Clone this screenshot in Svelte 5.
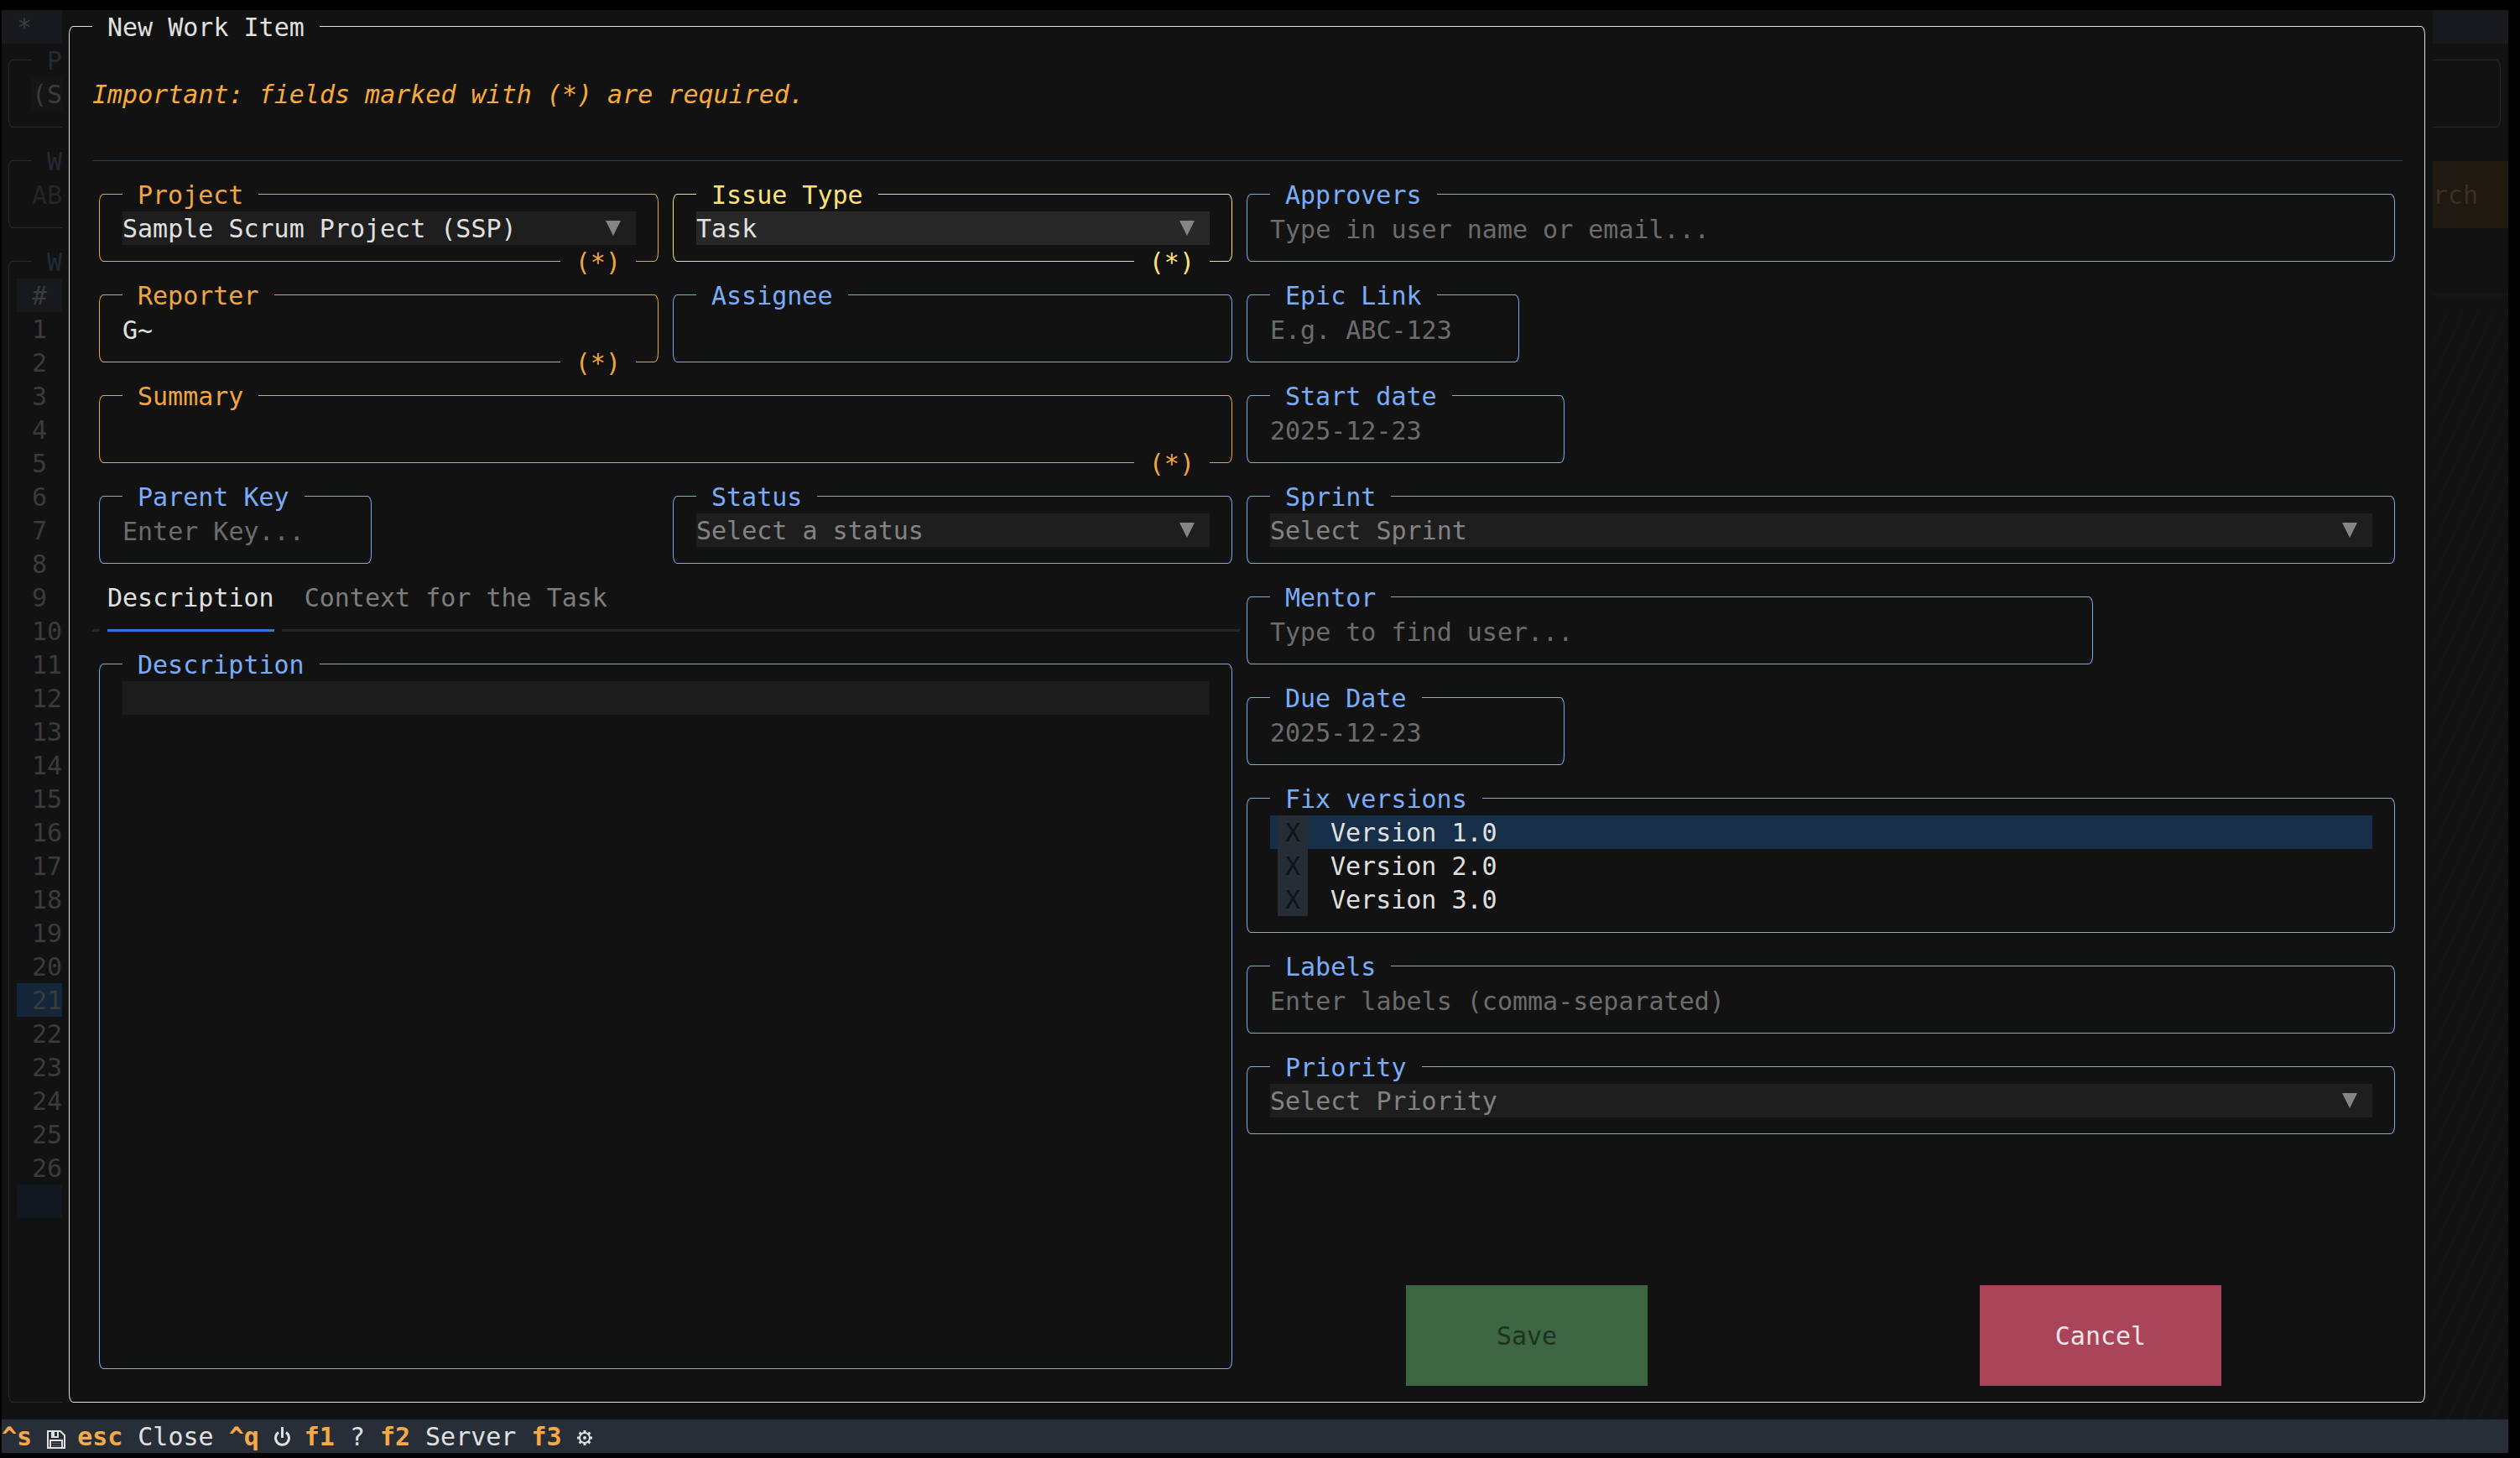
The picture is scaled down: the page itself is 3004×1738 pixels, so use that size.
<script lang="ts">
  interface Field {
    id: string;
    label: string;
    kind: 'text' | 'select';
    value?: string;
    placeholder?: string;
    required?: boolean;
    focused?: boolean;
    size?: 'short' | 'date' | 'user' | 'wide';
  }

  const leftFields: Field[] = [
    { id: 'project', label: 'Project', kind: 'select', value: 'Sample Scrum Project (SSP)', required: true },
    { id: 'issue-type', label: 'Issue Type', kind: 'select', value: 'Task', required: true, focused: true },
    { id: 'reporter', label: 'Reporter', kind: 'text', value: 'G~', required: true },
    { id: 'assignee', label: 'Assignee', kind: 'text' },
    { id: 'summary', label: 'Summary', kind: 'text', required: true, size: 'wide' },
    { id: 'parent-key', label: 'Parent Key', kind: 'text', placeholder: 'Enter Key...', size: 'short' },
    { id: 'status', label: 'Status', kind: 'select', placeholder: 'Select a status' },
  ];

  const rightFields: Field[] = [
    { id: 'approvers', label: 'Approvers', kind: 'text', placeholder: 'Type in user name or email...' },
    { id: 'epic-link', label: 'Epic Link', kind: 'text', placeholder: 'E.g. ABC-123', size: 'short' },
    { id: 'start-date', label: 'Start date', kind: 'text', placeholder: '2025-12-23', size: 'date' },
    { id: 'sprint', label: 'Sprint', kind: 'select', placeholder: 'Select Sprint' },
    { id: 'mentor', label: 'Mentor', kind: 'text', placeholder: 'Type to find user...', size: 'user' },
    { id: 'due-date', label: 'Due Date', kind: 'text', placeholder: '2025-12-23', size: 'date' },
  ];

  const extraFields: Field[] = [
    { id: 'labels', label: 'Labels', kind: 'text', placeholder: 'Enter labels (comma-separated)' },
    { id: 'priority', label: 'Priority', kind: 'select', placeholder: 'Select Priority' },
  ];

  const tabs = ['Description', 'Context for the Task'];
  const versions = ['Version 1.0', 'Version 2.0', 'Version 3.0'];
  const rowNumbers = Array.from({ length: 26 }, (_, i) => i + 1);
  const selectedRow = 21;

  let activeTab = $state('Description');
  let activeVersion = $state('Version 1.0');
  let picked = $state<string[]>([]);

  function toggleVersion(version: string) {
    activeVersion = version;
    picked = picked.includes(version) ? picked.filter((v) => v !== version) : [...picked, version];
  }
</script>

{#snippet field(f: Field)}
  <div
    class="box field {f.size ?? ''}"
    class:required={f.required}
    class:focused={f.focused}
  >
    <label class="box-title" for={f.id}>{f.label}</label>
    {#if f.kind === 'select'}
      <div class="select">
        <select id={f.id} class:empty={!f.value}>
          <option>{f.value ?? f.placeholder}</option>
        </select>
        <svg class="arrow" viewBox="0 0 18 18" aria-hidden="true"><path d="M0 0H18L9 18Z" /></svg>
      </div>
    {:else}
      <input id={f.id} type="text" value={f.value ?? ''} placeholder={f.placeholder} />
    {/if}
    <div class="box-foot">
      {#if f.required}<span class="box-subtitle">(*)</span>{/if}
    </div>
  </div>
{/snippet}

<div class="app">
  <div class="screen">
    <!-- Dimmed main screen -->
    <div class="backdrop" aria-hidden="true">
      <div class="topbar">*</div>
      <div class="box dim">
        <span class="box-title">P</span>
        <div class="dim-select">(S</div>
        <div class="box-foot"></div>
      </div>
      <div class="search-row">
        <div class="box dim grow">
          <span class="box-title">W</span>
          <div class="dim-input">AB</div>
          <div class="box-foot"></div>
        </div>
        <button class="search" type="button" tabindex="-1">rch</button>
      </div>
      <div class="results">
        <div class="box dim grow items">
          <span class="box-title">W</span>
          <table>
            <thead>
              <tr><th>#</th></tr>
            </thead>
            <tbody>
              {#each rowNumbers as n (n)}
                <tr class:selected={n === selectedRow}><td>{n}</td></tr>
              {/each}
              <tr class="tail"><td></td></tr>
            </tbody>
          </table>
        </div>
        <div class="side">
          <div class="side-rule"></div>
          <svg class="hatch">
            <defs>
              <pattern id="hatch" width="18" height="40" patternUnits="userSpaceOnUse">
                <path d="M0 40L18 0" stroke="#171717" stroke-width="1" />
              </pattern>
            </defs>
            <rect width="100%" height="100%" fill="url(#hatch)" />
          </svg>
        </div>
      </div>
    </div>

    <!-- Dialog -->
    <form class="box modal" aria-labelledby="modal-title" onsubmit={(e) => e.preventDefault()}>
      <h1 id="modal-title" class="box-title">New Work Item</h1>
      <p class="notice">Important: fields marked with (*) are required.</p>
      <hr />

      <div class="body">
        <div class="left">
          <div class="left-grid">
            {#each leftFields as f (f.id)}
              {@render field(f)}
            {/each}
          </div>

          <div class="tabs" role="tablist">
            {#each tabs as tab (tab)}
              <button
                class="tab"
                class:active={tab === activeTab}
                role="tab"
                type="button"
                aria-selected={tab === activeTab}
                onclick={() => (activeTab = tab)}
              >
                {tab}
              </button>
            {/each}
          </div>

          <div class="box field description">
            <label class="box-title" for="description">Description</label>
            <textarea id="description"></textarea>
            <div class="box-foot"></div>
          </div>
        </div>

        <div class="right">
          {#each rightFields as f (f.id)}
            {@render field(f)}
          {/each}

          <div class="box field" role="group" aria-labelledby="fix-versions">
            <span id="fix-versions" class="box-title">Fix versions</span>
            {#each versions as version (version)}
              <label class="version" class:active={version === activeVersion}>
                <input
                  type="checkbox"
                  checked={picked.includes(version)}
                  onchange={() => toggleVersion(version)}
                />
                <span class="mark" class:on={picked.includes(version)}>X</span>
                <span class="version-name">{version}</span>
              </label>
            {/each}
            <div class="box-foot"></div>
          </div>

          {#each extraFields as f (f.id)}
            {@render field(f)}
          {/each}

          <div class="actions">
            <button class="action save" type="submit">Save</button>
            <button class="action cancel" type="button">Cancel</button>
          </div>
        </div>
      </div>
    </form>
  </div>

  <footer>
    <kbd>^s</kbd>
    <span class="icon">
      <svg width="22" height="22" viewBox="0 0 22 22" role="img" aria-label="Save">
        <path d="M1 1H16L21 6V21H1Z" fill="none" stroke="#e0e0e0" stroke-width="2" />
        <path d="M5 1H14V9H5Z" fill="#e0e0e0" />
        <path d="M9 2H12V7H9Z" fill="#272e37" />
        <path d="M4 21V12H18V21" fill="none" stroke="#e0e0e0" stroke-width="2" />
        <path d="M6 15.5H16M6 18.5H16" stroke="#59616a" stroke-width="1" />
      </svg>
    </span>
    <kbd>esc</kbd>
    <span>Close</span>
    <kbd>^q</kbd>
    <span class="icon tall">
      <svg width="19" height="23" viewBox="0 0 19 23" role="img" aria-label="Quit">
        <path d="M5 6.6A8 8 0 1 0 14 6.6" fill="none" stroke="#e0e0e0" stroke-width="3" />
        <path d="M9.5 0V13" stroke="#e0e0e0" stroke-width="3" />
      </svg>
    </span>
    <kbd>f1</kbd>
    <span>?</span>
    <kbd>f2</kbd>
    <span>Server</span>
    <kbd>f3</kbd>
    <span class="icon">
      <svg width="18" height="18" viewBox="0 0 18 18" role="img" aria-label="Settings">
        <circle cx="9" cy="9" r="6" fill="none" stroke="#e0e0e0" stroke-width="2" />
        <circle cx="9" cy="9" r="2" fill="#e0e0e0" />
        <path
          d="M9 0V3M9 15V18M0 9H3M15 9H18M2.6 2.6L4.8 4.8M13.2 13.2L15.4 15.4M2.6 15.4L4.8 13.2M13.2 4.8L15.4 2.6"
          stroke="#e0e0e0"
          stroke-width="3"
        />
      </svg>
    </span>
  </footer>
</div>

<style>
  :global(body) {
    background: #000;
  }

  .app {
    --bg: #121212;
    --text: #e0e0e0;
    --blue: #7aacf8;
    --orange: #f0a544;
    --yellow: #fbe27a;
    --dim-line: #212a35;
    --row: 40px;
    --cell: 18px;
    box-sizing: border-box;
    display: flex;
    flex-direction: column;
    min-height: 100vh;
    padding: 12px 14px 6px 2px;
    background: #000;
    color: var(--text);
    font-family: 'DejaVu Sans Mono', 'Liberation Mono', monospace;
    font-size: 30px;
    line-height: 38px;
  }

  .app *,
  .app *::before,
  .app *::after {
    box-sizing: border-box;
  }

  button,
  input,
  select,
  textarea,
  kbd {
    font: inherit;
    color: inherit;
  }

  /* ── Bordered box ── */
  .box {
    --line: var(--blue);
    position: relative;
    display: flex;
    flex-direction: column;
    padding: 0 36px;
  }

  .box::before {
    content: '';
    position: absolute;
    inset: 19px 9px 20px 8px;
    border: 1px solid var(--line);
    border-radius: 5px / 10px;
    pointer-events: none;
  }

  .box-title,
  .box-subtitle {
    position: relative;
    height: var(--row);
    padding: 2px var(--cell) 0;
    background: var(--bg);
    color: var(--line);
    white-space: nowrap;
  }

  .box-title {
    align-self: flex-start;
  }

  .box-foot {
    display: flex;
    justify-content: flex-end;
    height: var(--row);
  }

  /* ── Main screen behind the dialog ── */
  .screen {
    position: relative;
    display: flex;
    flex: 1;
    background: var(--bg);
  }

  .backdrop {
    position: absolute;
    inset: 0;
    display: flex;
    flex-direction: column;
    overflow: hidden;
    color: #3b3b3b;
  }

  .topbar {
    height: var(--row);
    padding: 2px 0 0 var(--cell);
    background: #17191c;
  }

  .dim {
    --line: var(--dim-line);
  }

  .grow {
    flex: 1;
  }

  .dim-select {
    width: 50%;
    height: var(--row);
    padding-top: 2px;
    background: #151515;
  }

  .dim-input {
    height: var(--row);
    padding-top: 2px;
    color: #252525;
  }

  .search-row,
  .results {
    display: flex;
  }

  .results {
    flex: 1;
  }

  .search {
    width: 90px;
    height: 80px;
    margin: 20px 0;
    padding: 2px 0 0;
    border: 0;
    background: #1f1912;
    color: #3a3024;
    text-align: left;
  }

  .items {
    padding: 0 var(--cell);
  }

  .items .box-title {
    margin-left: var(--cell);
  }

  .items table {
    border-collapse: collapse;
  }

  .items th,
  .items td {
    height: var(--row);
    padding: 2px 0 0 var(--cell);
    font-weight: normal;
    text-align: left;
  }

  .items th {
    background: #17191c;
  }

  .items .selected {
    background: #13263a;
  }

  .items .tail {
    background: #11181f;
  }

  .side {
    display: flex;
    flex-direction: column;
    width: 90px;
    padding-top: 58px;
  }

  .side-rule {
    height: 3px;
    margin-bottom: 19px;
    background: #151515;
  }

  .hatch {
    flex: 1;
    width: 100%;
  }

  /* ── Dialog ── */
  .modal {
    --line: var(--text);
    flex: 1;
    margin: 0 90px 0 72px;
    padding-bottom: var(--row);
    background: var(--bg);
  }

  h1 {
    margin: 0;
    font-size: 30px;
    font-weight: normal;
  }

  .notice {
    height: var(--row);
    margin: 40px 0;
    padding-top: 2px;
    color: #f6ab3c;
    font-style: italic;
  }

  hr {
    width: 100%;
    height: 1px;
    margin: 19px 0 20px;
    border: 0;
    background: #1d3f60;
  }

  .body {
    display: flex;
    flex: 1;
  }

  .left {
    display: flex;
    flex: 76 0 0;
    flex-direction: column;
    min-width: 0;
  }

  .left-grid {
    display: grid;
    grid-template-columns: 1fr 1fr;
  }

  .right {
    display: flex;
    flex: 77 0 0;
    flex-direction: column;
    min-width: 0;
  }

  /* ── Fields ── */
  .required {
    --line: var(--orange);
  }

  .focused {
    --line: var(--yellow);
  }

  .wide {
    grid-column: span 2;
  }

  .short {
    width: 342px;
  }

  .date {
    width: 396px;
  }

  .user {
    width: 1026px;
  }

  input[type='text'],
  select,
  textarea {
    display: block;
    width: 100%;
    height: var(--row);
    padding: 2px 0 0;
    border: 0;
    border-radius: 0;
    outline: none;
    background: transparent;
    color: var(--text);
  }

  input::placeholder {
    color: #6c6c6c;
    opacity: 1;
  }

  .select {
    position: relative;
  }

  select {
    appearance: none;
    background: #1e1e1e;
  }

  select.empty {
    color: #838383;
  }

  .focused select {
    background: #282828;
  }

  .arrow {
    position: absolute;
    top: 11px;
    right: 18px;
    width: 18px;
    height: 18px;
    fill: #858585;
    pointer-events: none;
  }

  /* ── Tabs ── */
  .tabs {
    display: flex;
    gap: 36px;
    height: 80px;
    padding-left: var(--cell);
    background: linear-gradient(#262626, #262626) 0 58px / 100% 3px no-repeat;
  }

  .tab {
    position: relative;
    padding: 2px 0 40px;
    border: 0;
    background: none;
    color: #7d7d7d;
  }

  .tab.active {
    color: var(--text);
  }

  .tab.active::after {
    content: '';
    position: absolute;
    top: 58px;
    right: -9px;
    left: -9px;
    height: 3px;
    border: solid var(--bg);
    border-width: 0 9px;
    background: #3178d0;
  }

  .description {
    flex: 1;
  }

  textarea {
    flex: 1;
    background: linear-gradient(#1c1c1c, #1c1c1c) top / 100% 40px no-repeat;
    resize: none;
  }

  /* ── Fix versions ── */
  .version {
    position: relative;
    display: flex;
    gap: 27px;
    height: var(--row);
    padding-left: 9px;
  }

  .version.active {
    background: #162e48;
  }

  .version input {
    position: absolute;
    inset: 0;
    width: 100%;
    height: 100%;
    margin: 0;
    opacity: 0;
  }

  .version-name,
  .mark {
    padding-top: 2px;
  }

  .mark {
    width: 36px;
    background: #262d35;
    color: #0b141c;
    text-align: center;
  }

  .mark.on {
    color: #4ebf71;
  }

  /* ── Buttons ── */
  .actions {
    display: grid;
    grid-template-columns: 1fr 1fr;
    justify-items: center;
    margin-top: auto;
    padding-right: var(--cell);
  }

  .action {
    width: 288px;
    height: 120px;
    padding: 2px 0 0;
    border: 0;
  }

  .save {
    background: #3d6643;
    color: #1e3321;
  }

  .cancel {
    background: #aa4459;
    color: #f3e6e9;
  }

  /* ── Key bar ── */
  footer {
    display: flex;
    gap: var(--cell);
    height: var(--row);
    padding-top: 2px;
    background: #272e37;
  }

  kbd {
    color: #f5a947;
    font-weight: bold;
  }

  .icon {
    display: flex;
    width: var(--cell);
    padding-top: 11px;
  }

  .icon.tall {
    padding-top: 7px;
  }

  .icon svg {
    flex: none;
  }
</style>
